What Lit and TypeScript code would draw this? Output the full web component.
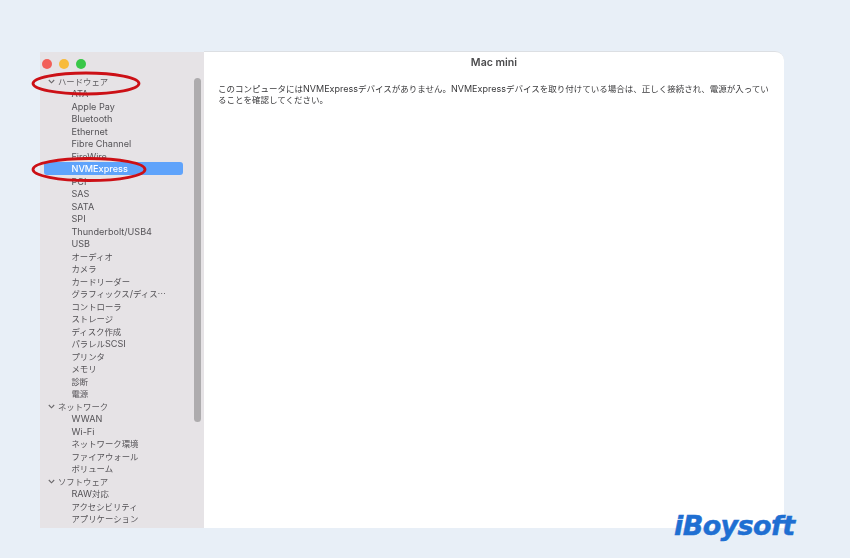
import { LitElement, html, css, svg } from "lit";
import { customElement } from "lit/decorators.js";

type Row = { t: string; head?: boolean; sel?: boolean };
const rows: Row[] = [
  { t: "ハードウェア", head: true }, { t: "ATA" }, { t: "Apple Pay" }, { t: "Bluetooth" }, { t: "Ethernet" },
  { t: "Fibre Channel" }, { t: "FireWire" }, { t: "NVMExpress", sel: true }, { t: "PCI" }, { t: "SAS" }, { t: "SATA" },
  { t: "SPI" }, { t: "Thunderbolt/USB4" }, { t: "USB" }, { t: "オーディオ" }, { t: "カメラ" }, { t: "カードリーダー" },
  { t: "グラフィックス/ディス…" }, { t: "コントローラ" }, { t: "ストレージ" }, { t: "ディスク作成" }, { t: "パラレルSCSI" },
  { t: "プリンタ" }, { t: "メモリ" }, { t: "診断" }, { t: "電源" },
  { t: "ネットワーク", head: true }, { t: "WWAN" }, { t: "Wi-Fi" }, { t: "ネットワーク環境" }, { t: "ファイアウォール" }, { t: "ボリューム" },
  { t: "ソフトウェア", head: true }, { t: "RAW対応" }, { t: "アクセシビリティ" }, { t: "アプリケーション" },
];

const mixed = (t: string) =>
  t.split(/([A-Za-z0-9 /-]+)/).filter(Boolean).map(p =>
    /^[A-Za-z0-9 /-]+$/.test(p) ? html`<span class="lat">${p}</span>` : p);

@customElement("app-root")
export class AppRoot extends LitElement {
  static styles = css`
    :host {
      display: block; width: 850px; height: 558px; box-sizing: border-box; position: relative; overflow: hidden;
      padding: 52px 66px 30px 40px; background: #e8eff7;
      font-family: "Noto Sans CJK JP", sans-serif; color: #3a3a3c;
    }
    .lat { font-family: Inter, "Liberation Sans", sans-serif; }
    .win { display: flex; height: 100%; position: relative; filter: blur(0.3px); }
    .side { width: 164px; background: #e6e3e6; display: flex; flex-direction: column; overflow: hidden; flex: none; }
    .lights { display: flex; gap: 6.7px; padding: 6.5px 0 0 2.3px; height: 22.5px; box-sizing: border-box; }
    .dot { width: 10px; height: 10px; border-radius: 50%; }
    .r { background: #f25f58; } .y { background: #f8bb3b; } .g { background: #39c748; }
    .list { display: flex; flex-direction: column; }
    .row { height: 12.5px; line-height: 12.5px; font-size: 8.4px; white-space: nowrap; padding-left: 31.5px; color: #555357; }
    .row .lat { font-size: 9.1px; }
    .row.head { padding-left: 8px; display: flex; align-items: center; gap: 3px; color: #5f5d60; }
    .row.sel { background: #5fa3fb; color: #fff; border-radius: 3px; margin: 0 21px 0 4px; padding-left: 27.5px; }
    .row.sel .lat { font-weight: 500; }
    .head svg { width: 7px; height: 5px; flex: none; position: relative; top: 1px; }
    .scroll { position: absolute; left: 154px; top: 26px; width: 7px; height: 344px; background: #aeacae; border-radius: 3.5px; }
    .main { flex: 1; background: #fff; border-top-right-radius: 9px; border-top: 1px solid #dcdfe3; padding: 5px 10px 0 14px; margin-top: -1px; }
    .title { text-align: center; font-size: 10.6px; font-weight: 600; line-height: 12px; color: #4a4a4c; font-family: Inter, sans-serif; padding-right: 4px; }
    .msg { margin: 14px 0 0; font-size: 8.5px; line-height: 11px; color: #3a3a3c; }
    .msg .lat { font-size: 9px; line-height: 11px; }
    .ov { position: absolute; left: 0; top: 0; width: 850px; height: 558px; pointer-events: none; }
    .logo {
      position: absolute; left: 674px; top: 510px; font-size: 27px; line-height: 32px; font-weight: 700; font-style: italic;
      font-family: "DejaVu Sans", sans-serif; color: #1f6fd2; letter-spacing: -0.6px; -webkit-text-stroke: 0.5px #1f6fd2;
    }
  `;

  render() {
    return html`
      <div class="win">
        <div class="side">
          <div class="lights"><div class="dot r"></div><div class="dot y"></div><div class="dot g"></div></div>
          <div class="list">
            ${rows.map(r => html`<div class="row ${r.head ? "head" : ""} ${r.sel ? "sel" : ""}">
              ${r.head ? html`<svg viewBox="0 0 7 5"><path d="M.8 1l2.7 2.8L6.2 1" fill="none" stroke="#6a686b" stroke-width="1.1"/></svg>` : ""}<span>${mixed(r.t)}</span></div>`)}
          </div>
        </div>
        <div class="scroll"></div>
        <div class="main">
          <div class="title">Mac mini</div>
          <p class="msg">${mixed("このコンピュータにはNVMExpressデバイスがありません。NVMExpressデバイスを取り付けている場合は、正しく接続され、電源が入っていることを確認してください。")}</p>
        </div>
      </div>
      <svg class="ov" viewBox="0 0 850 558">
        ${svg`<ellipse cx="86" cy="83.5" rx="53" ry="10.5" fill="none" stroke="#cc1016" stroke-width="2.8"/>
        <ellipse cx="89" cy="169.5" rx="56" ry="11" fill="none" stroke="#cc1016" stroke-width="2.8"/>`}
      </svg>
      <div class="logo">iBoysoft</div>
    `;
  }
}
